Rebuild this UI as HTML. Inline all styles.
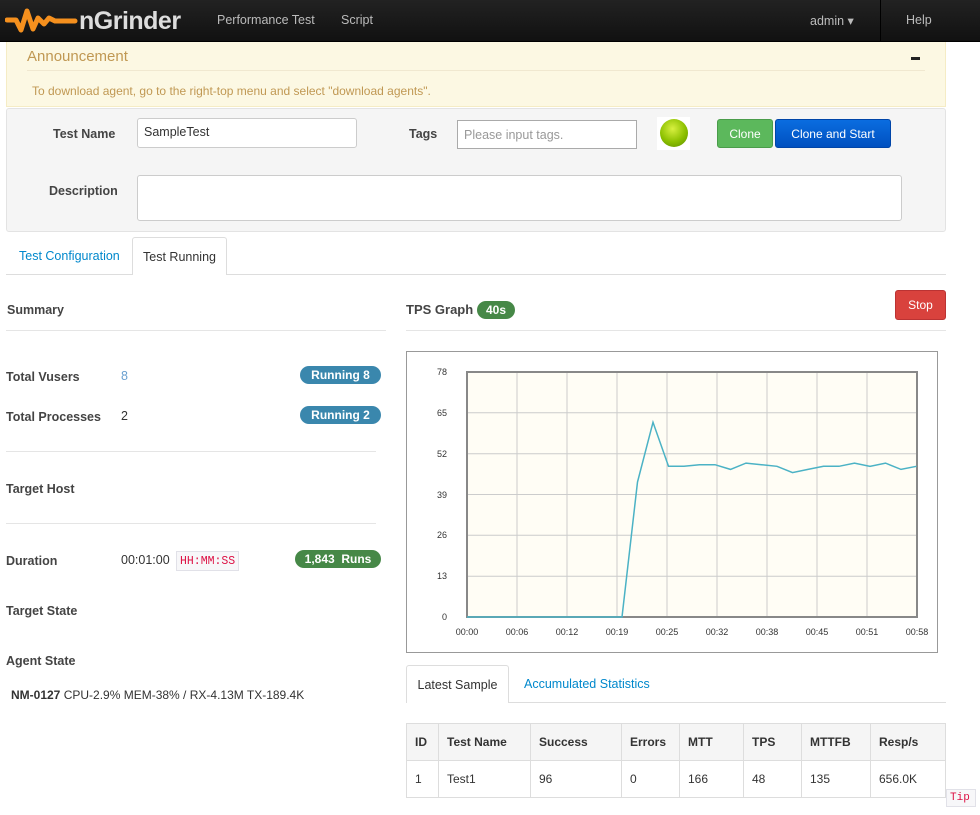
<!DOCTYPE html>
<html><head><meta charset="utf-8"><style>
*{box-sizing:border-box}
body{margin:0;width:980px;height:815px;overflow:hidden;background:#fff;font-family:"Liberation Sans",Arial,sans-serif;font-size:12.5px;color:#333;position:relative}
.a{position:absolute}
.nav{left:0;top:0;width:980px;height:42px;background:linear-gradient(#222,#111);border-bottom:1px solid #000}
.nav span{position:absolute;top:13px;color:#bbb;font-size:12.5px}
.lbl{font-weight:bold;color:#444;font-size:12.5px}
.badge{color:#fff;font-weight:bold;font-size:12px;border-radius:10px;height:18px;line-height:18px;text-align:center}
.btn{color:#fff;font-size:12px;text-align:center;border-radius:3px;height:29px;line-height:28px}
.hr{height:1px;background:#e5e5e5}
th,td{text-align:left;padding:0 8px;border-left:1px solid #ddd;font-size:12px}
table{border-collapse:collapse}
</style></head><body>
<div class="a nav">
<svg class="a" style="left:5px;top:6px" width="80" height="30" viewBox="0 0 80 30"><polyline points="2,14 11,14 16,24 22,5 28,23 33,12 39,18 44,12 50,15 70,15" fill="none" stroke="#f5901e" stroke-width="5" stroke-linejoin="round" stroke-linecap="round"/></svg>
<div class="a" style="left:79px;top:7px;font-size:25px;font-weight:bold;color:#ddd;letter-spacing:-0.5px">nGrinder</div>
<span style="left:217px">Performance Test</span><span style="left:341px">Script</span>
<span style="left:810px">admin ▾</span>
<div class="a" style="left:880px;top:0;width:1px;height:42px;background:#000"></div>
<span style="left:906px">Help</span>
</div>
<div class="a" style="left:6px;top:42px;width:940px;height:65px;background:#fcf8e3;border:1px solid #f5ecc5;border-top:0"></div>
<div class="a" style="left:27px;top:48px;font-size:15px;color:#c09853">Announcement</div>
<div class="a" style="left:911px;top:57px;width:9px;height:3px;background:#222"></div>
<div class="a hr" style="left:27px;top:70px;width:898px;background:#f0e8d0"></div>
<div class="a" style="left:32px;top:84px;font-size:12px;color:#c09853">To download agent, go to the right-top menu and select "download agents".</div>
<div class="a" style="left:6px;top:108px;width:940px;height:124px;background:#f5f5f5;border:1px solid #e3e3e3;border-radius:3px"></div>
<div class="a lbl" style="left:53px;top:127px">Test Name</div>
<div class="a" style="left:137px;top:118px;width:220px;height:30px;background:#fff;border:1px solid #ccc;border-radius:3px;padding:6px;font-size:12.5px">SampleTest</div>
<div class="a lbl" style="left:409px;top:127px">Tags</div>
<div class="a" style="left:457px;top:120px;width:180px;height:29px;background:#fff;border:1px solid #aaa;padding:7px 6px;font-size:12.5px;color:#999">Please input tags.</div>
<div class="a" style="left:657px;top:117px;width:33px;height:33px;background:#fff"></div>
<div class="a" style="left:660px;top:119px;width:28px;height:28px;border-radius:50%;background:radial-gradient(circle at 45% 35%,#d8f040,#8cc000 55%,#5a8a00)"></div>
<div class="a btn" style="left:717px;top:119px;width:56px;background:#5cb85c;border:1px solid #4a9c4a">Clone</div>
<div class="a btn" style="left:775px;top:119px;width:116px;background:linear-gradient(#0a6de0,#0050c0);border:1px solid #0045a8">Clone and Start</div>
<div class="a lbl" style="left:49px;top:184px">Description</div>
<div class="a" style="left:137px;top:175px;width:765px;height:46px;background:#fff;border:1px solid #ccc;border-radius:3px"></div>
<div class="a hr" style="left:6px;top:274px;width:940px;background:#ddd"></div>
<div class="a" style="left:19px;top:249px;color:#0088cc;font-size:12.5px">Test Configuration</div>
<div class="a" style="left:132px;top:237px;width:95px;height:38px;background:#fff;border:1px solid #ddd;border-bottom:0;border-radius:3px 3px 0 0;padding-top:12px;text-align:center;font-size:12.5px">Test Running</div>
<div class="a lbl" style="left:7px;top:303px">Summary</div>
<div class="a hr" style="left:6px;top:330px;width:380px"></div>
<div class="a lbl" style="left:406px;top:302px;font-size:13px">TPS Graph</div>
<div class="a badge" style="left:477px;top:301px;width:38px;background:#468847">40s</div>
<div class="a hr" style="left:406px;top:330px;width:540px"></div>
<div class="a btn" style="left:895px;top:290px;width:51px;height:30px;background:#d9423d;border:1px solid #b33">Stop</div>
<div class="a lbl" style="left:6px;top:370px">Total Vusers</div><div class="a" style="left:121px;top:369px;color:#6aa0d0">8</div>
<div class="a badge" style="left:300px;top:366px;width:81px;background:#3a87ad">Running 8</div>
<div class="a lbl" style="left:6px;top:410px">Total Processes</div><div class="a" style="left:121px;top:409px">2</div>
<div class="a badge" style="left:300px;top:406px;width:81px;background:#3a87ad">Running 2</div>
<div class="a hr" style="left:6px;top:451px;width:370px"></div>
<div class="a lbl" style="left:6px;top:482px">Target Host</div>
<div class="a hr" style="left:6px;top:523px;width:370px"></div>
<div class="a lbl" style="left:6px;top:554px">Duration</div>
<div class="a" style="left:121px;top:553px">00:01:00</div>
<div class="a" style="left:176px;top:551px;width:63px;height:20px;border:1px solid #e1e1e8;background:#f7f7f9;color:#d14;font-family:'Liberation Mono',monospace;font-size:11.5px;padding:3px 3px">HH:MM:SS</div>
<div class="a badge" style="left:295px;top:550px;width:86px;background:#468847">1,843 &nbsp;Runs</div>
<div class="a lbl" style="left:6px;top:604px">Target State</div>
<div class="a lbl" style="left:6px;top:654px">Agent State</div>
<div class="a" style="left:11px;top:688px;font-size:12px"><b>NM-0127</b> CPU-2.9% MEM-38% / RX-4.13M TX-189.4K</div>
<div class="a" style="left:406px;top:351px;width:532px;height:302px;border:1px solid #999"></div>
<svg class="a" style="left:0;top:0" width="980" height="815" font-family="Liberation Sans,sans-serif" font-size="9" fill="#333">
<rect x="467" y="372" width="450" height="245" fill="#fffdf5"/>
<g stroke="#ccc" stroke-width="1">
<line x1="467" x2="917" y1="412.8" y2="412.8"/><line x1="467" x2="917" y1="453.7" y2="453.7"/><line x1="467" x2="917" y1="494.5" y2="494.5"/><line x1="467" x2="917" y1="535.3" y2="535.3"/><line x1="467" x2="917" y1="576.2" y2="576.2"/>
<line y1="372" y2="617" x1="517" x2="517"/><line y1="372" y2="617" x1="567" x2="567"/><line y1="372" y2="617" x1="617" x2="617"/><line y1="372" y2="617" x1="667" x2="667"/><line y1="372" y2="617" x1="717" x2="717"/><line y1="372" y2="617" x1="767" x2="767"/><line y1="372" y2="617" x1="817" x2="817"/><line y1="372" y2="617" x1="867" x2="867"/>
</g>
<rect x="467" y="372" width="450" height="245" fill="none" stroke="#888" stroke-width="2"/>
<polyline fill="none" stroke="#4bb2c5" stroke-width="1.5" points="467,617 482.5,617 498,617 513.5,617 529,617 544.5,617 560,617 575.5,617 591,617 606.5,617 622,617 637.5,482 653,422.3 668.5,466.3 684,466.3 699.5,464.7 715,464.7 730.5,469.4 746,463.1 761.5,464.7 777,466.3 792.5,472.6 808,469.4 823.5,466.3 839,466.3 854.5,463.1 870,466.3 885.5,463.1 901,469.4 916.5,466.3"/>
<g text-anchor="end"><text x="447" y="375">78</text><text x="447" y="416">65</text><text x="447" y="457">52</text><text x="447" y="498">39</text><text x="447" y="538">26</text><text x="447" y="579">13</text><text x="447" y="620">0</text></g>
<g text-anchor="middle"><text x="467" y="635">00:00</text><text x="517" y="635">00:06</text><text x="567" y="635">00:12</text><text x="617" y="635">00:19</text><text x="667" y="635">00:25</text><text x="717" y="635">00:32</text><text x="767" y="635">00:38</text><text x="817" y="635">00:45</text><text x="867" y="635">00:51</text><text x="917" y="635">00:58</text></g>
</svg>
<div class="a hr" style="left:406px;top:702px;width:540px;background:#ddd"></div>
<div class="a" style="left:406px;top:665px;width:103px;height:38px;background:#fff;border:1px solid #ddd;border-bottom:0;border-radius:3px 3px 0 0;padding-top:12px;text-align:center;font-size:12.5px">Latest Sample</div>
<div class="a" style="left:524px;top:677px;color:#0088cc;font-size:12.5px">Accumulated Statistics</div>
<table class="a" style="left:406px;top:723px;width:540px;border:1px solid #ddd">
<tr style="height:37px;background:#f5f5f5;font-weight:bold"><th style="border-left:0;width:32px">ID</th><th style="width:92px">Test Name</th><th style="width:91px">Success</th><th style="width:58px">Errors</th><th style="width:64px">MTT</th><th style="width:58px">TPS</th><th style="width:69px">MTTFB</th><th>Resp/s</th></tr>
<tr style="height:37px;border-top:1px solid #ddd"><td style="border-left:0">1</td><td>Test1</td><td>96</td><td>0</td><td>166</td><td>48</td><td>135</td><td>656.0K</td></tr>
</table>
<div class="a" style="left:946px;top:789px;width:30px;height:18px;border:1px solid #e1e1e8;background:#f7f7f9;color:#d14;font-family:'Liberation Mono',monospace;font-size:11px;padding:2px 3px">Tip</div>
</body></html>
